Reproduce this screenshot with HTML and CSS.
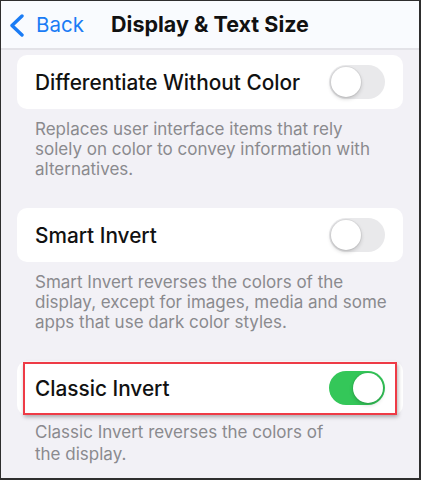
FILE: index.html
```html
<!DOCTYPE html>
<html>
<head>
<meta charset="utf-8">
<link rel="stylesheet" href="styles.css">
</head>
<body>
<div class="frame">
  <header class="nav">
    <div class="back">
      <svg class="chev" width="17" height="23" viewBox="0 0 17 23"><path d="M14 2 L4 11.5 L14 21" fill="none" stroke="#1a7cf5" stroke-width="3.4" stroke-linecap="round" stroke-linejoin="round"/></svg>
      <span class="back-label">Back</span>
    </div>
    <div class="title">Display &amp; Text Size</div>
  </header>
  <main class="content">
    <section class="group">
      <div class="card">
        <span class="label">Differentiate Without Color</span>
        <span class="toggle"><span class="knob"></span></span>
      </div>
      <p class="foot">Replaces user interface items that rely<br>solely on color to convey information with<br>alternatives.</p>
    </section>
    <section class="group">
      <div class="card">
        <span class="label">Smart Invert</span>
        <span class="toggle"><span class="knob"></span></span>
      </div>
      <p class="foot">Smart Invert reverses the colors of the<br>display, except for images, media and some<br>apps that use dark color styles.</p>
    </section>
    <section class="group">
      <div class="card highlighted">
        <span class="label">Classic Invert</span>
        <span class="toggle on"><span class="knob"></span></span>
        <span class="redbox"></span>
      </div>
      <p class="foot narrow">Classic Invert reverses the colors of<br>the display.</p>
    </section>
  </main>
</div>
</body>
</html>
```
FILE: styles.css
```css
html, body {
  margin: 0;
  padding: 0;
  background: #3a3a3a;
}
body {
  width: 421px;
  height: 480px;
  overflow: hidden;
  font-family: Inter, "Liberation Sans", sans-serif;
}
.frame {
  box-sizing: border-box;
  width: 421px;
  height: 480px;
  margin: 0;
  border-top: 1px solid #2e2e2e;
  border-left: 1px solid #2e2e2e;
  border-right: 2px solid #2e2e2e;
  border-bottom: 2px solid #2e2e2e;
  background: #f2f1f6;
  overflow: hidden;
}
.nav {
  height: 47px;
  background: #f9fbfe;
  border-bottom: 2px solid #e3e3e8;
  display: flex;
  align-items: center;
  position: relative;
}
.back {
  display: flex;
  align-items: center;
  padding-left: 7px;
  gap: 11px;
  color: #1a7cf5;
  font-size: 20.5px;
}
.chev { display: block; margin-top: 1px; }
.title {
  position: absolute;
  left: 0;
  right: 0;
  top: 0;
  height: 47px;
  line-height: 47px;
  text-align: center;
  font-weight: 700;
  font-size: 21.5px;
  color: #111;
  pointer-events: none;
}
.content {
  padding: 5px 16px 0 16px;
}
.group {
  margin-bottom: 29px;
}
.card {
  height: 54px;
  background: #fff;
  border-radius: 10px;
  display: flex;
  align-items: center;
  justify-content: space-between;
  padding: 0 18px 0 18px;
  position: relative;
}
.label {
  font-size: 20.8px;
  color: #111;
  font-weight: 500;
}
.toggle {
  width: 56px;
  height: 34px;
  border-radius: 17px;
  background: #e9e9eb;
  position: relative;
  flex: none;
}
.knob {
  position: absolute;
  top: 2px;
  left: 2px;
  width: 30px;
  height: 30px;
  border-radius: 50%;
  background: #fff;
  box-shadow: 0 2px 4px rgba(0,0,0,0.18), 0 0 0 1px rgba(0,0,0,0.05);
}
.toggle.on { background: #34c759; }
.toggle.on .knob { left: 24px; }
.redbox {
  position: absolute;
  left: 6px;
  right: 6px;
  top: 1px;
  bottom: 0;
  border: 2px solid #ee3b46;
  box-shadow: 1px 2px 4px rgba(0,0,0,0.3);
  pointer-events: none;
}
.foot {
  margin: 0;
  padding: 10px 12px 0 18px;
  font-size: 17px;
  line-height: 20px;
  color: #8a8a8e;
  white-space: nowrap;
}
.foot.narrow { line-height: 22px; padding-top: 6px; }
```
